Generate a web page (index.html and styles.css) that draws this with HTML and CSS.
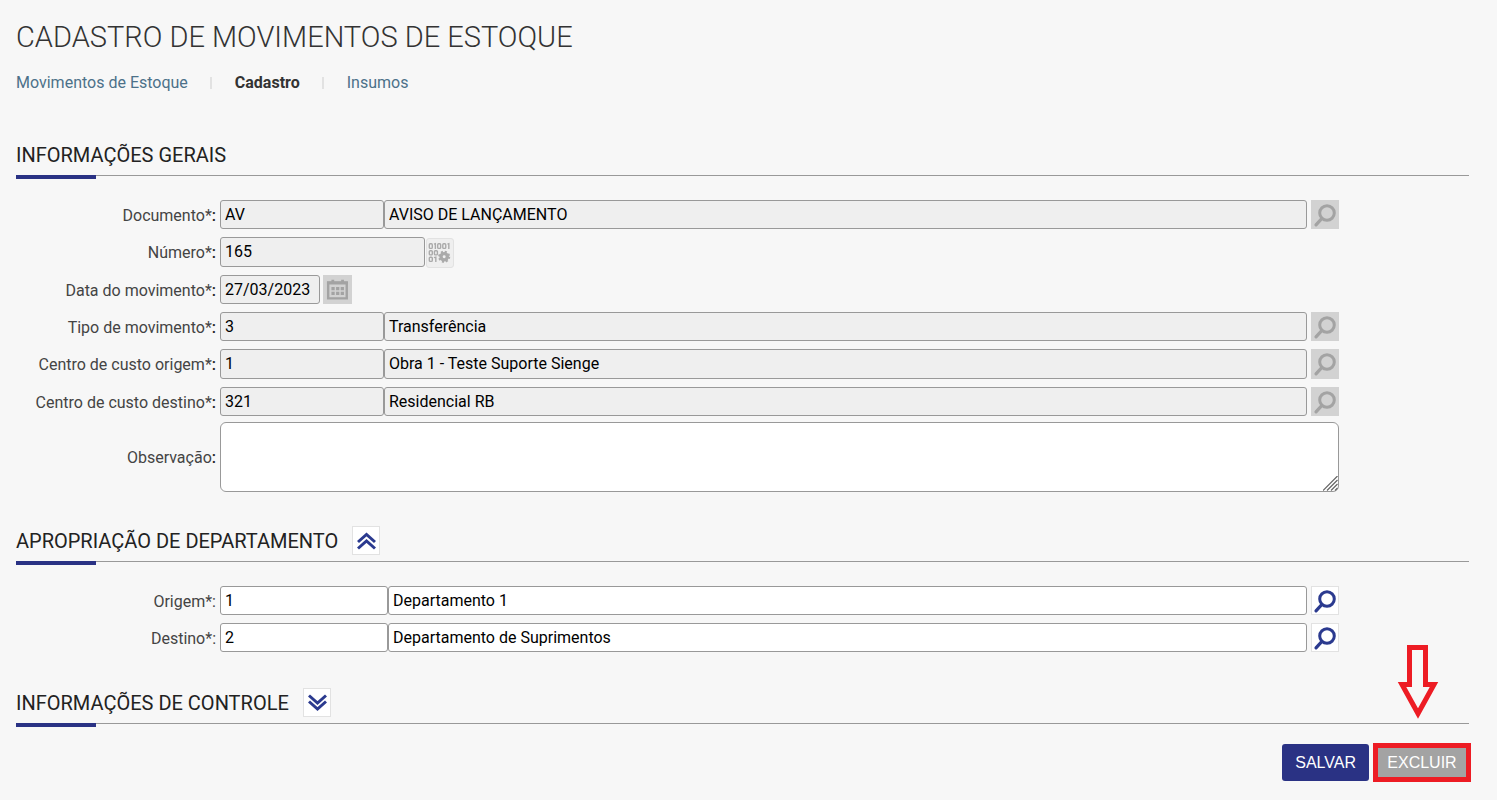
FILE: index.html
```
<!DOCTYPE html>
<html lang="pt-BR">
<head>
<meta charset="utf-8">
<meta name="viewport" content="width=device-width, initial-scale=1">
<title>Cadastro de Movimentos de Estoque</title>
<link rel="stylesheet" href="styles.css">
</head>
<body>
<svg class="sprite" aria-hidden="true">
  <symbol id="search" viewBox="0 0 26 26">
    <circle cx="15" cy="11" r="7.300" fill="none" stroke="currentColor" stroke-width="3"/>
    <path d="M9.500 16.800 L4 22.800" fill="none" stroke="currentColor" stroke-width="3.200" stroke-linecap="round"/>
  </symbol>
</svg>
<main class="page">
  <h1 class="title">CADASTRO DE MOVIMENTOS DE ESTOQUE</h1>
  <nav class="tabs">
    <a class="tab" href="#">Movimentos de Estoque</a>
    <a class="tab active" href="#" aria-current="page">Cadastro</a>
    <a class="tab" href="#">Insumos</a>
  </nav>

  <form class="form">
    <section class="section">
      <div class="heading"><h2>INFORMAÇÕES GERAIS</h2></div>
      <div class="rows">
        <div class="row">
          <label for="doc">Documento*<b>:</b></label>
          <div class="field"><input id="doc" class="code" value="AV" readonly><input class="desc" aria-label="Descrição do documento" value="AVISO DE LANÇAMENTO" readonly><button type="button" class="icon off" aria-label="Pesquisar documento"><svg><use href="#search"/></svg></button></div>
        </div>
        <div class="row tall">
          <label for="num">Número*<b>:</b></label>
          <div class="field"><input id="num" class="number" value="165" readonly><button type="button" class="icon generate" aria-label="Gerar número">
            <svg viewBox="0 0 28 28" fill="none" stroke="currentColor" stroke-width="1.500">
              <rect x="2.500" y="4" width="3.200" height="5" rx="1"/><path d="M7.500 4.500 L9 4 V9.800"/><rect x="11.500" y="4" width="3.200" height="5" rx="1"/><rect x="17" y="4" width="3.200" height="5" rx="1"/><path d="M22 4.500 L23.500 4 V9.800"/>
              <rect x="2.500" y="11.500" width="3.200" height="4.500" rx="1"/><rect x="8" y="11.500" width="3.200" height="4.500" rx="1"/>
              <rect x="2.500" y="18.500" width="3.200" height="4.500" rx="1"/><path d="M7.500 19 L9.500 18.500 V23.800"/>
              <circle cx="18.500" cy="18" r="3.400" stroke-width="3.600"/><circle cx="18.500" cy="18" r="5.400" stroke-width="2.200" stroke-dasharray="2.200 2.040"/>
            </svg></button></div>
        </div>
        <div class="row">
          <label for="date">Data do movimento*<b>:</b></label>
          <div class="field"><input id="date" class="date" value="27/03/2023" readonly><button type="button" class="icon off" aria-label="Abrir calendário">
            <svg viewBox="0 0 28 28"><path d="M4.500 6h20v17H4.500z" fill="none" stroke="currentColor" stroke-width="2.600"/><path d="M3.200 5h22.600v3H3.200zM8 3h3v3H8zM18.500 3h3v3h-3z" fill="currentColor"/><path d="M8 12.500h13.500M8 17.500h13.500" stroke="currentColor" stroke-width="3.500" stroke-dasharray="3.500 1.500"/></svg></button></div>
        </div>
        <div class="row">
          <label for="type">Tipo de movimento*<b>:</b></label>
          <div class="field"><input id="type" class="code" value="3" readonly><input class="desc" aria-label="Descrição do tipo" value="Transferência" readonly><button type="button" class="icon off" aria-label="Pesquisar tipo"><svg><use href="#search"/></svg></button></div>
        </div>
        <div class="row tall">
          <label for="from">Centro de custo origem*<b>:</b></label>
          <div class="field"><input id="from" class="code" value="1" readonly><input class="desc" aria-label="Nome do centro de custo origem" value="Obra 1 - Teste Suporte Sienge" readonly><button type="button" class="icon off" aria-label="Pesquisar origem"><svg><use href="#search"/></svg></button></div>
        </div>
        <div class="row">
          <label for="to">Centro de custo destino*<b>:</b></label>
          <div class="field"><input id="to" class="code" value="321" readonly><input class="desc" aria-label="Nome do centro de custo destino" value="Residencial RB" readonly><button type="button" class="icon off" aria-label="Pesquisar destino"><svg><use href="#search"/></svg></button></div>
        </div>
      </div>
      <div class="row note">
        <label for="obs">Observação<b>:</b></label>
        <div class="area">
          <textarea id="obs"></textarea>
          <svg class="grip" viewBox="0 0 15 15" aria-hidden="true"><path d="M0 14.500 L14.500 0M4 14.500 L14.500 4M8 14.500 L14.500 8M12 14.500 L14.500 12" fill="none" stroke="#666" stroke-width="1.200"/></svg>
        </div>
      </div>
    </section>

    <section class="section">
      <div class="heading"><h2>APROPRIAÇÃO DE DEPARTAMENTO</h2><button type="button" class="icon" aria-label="Recolher"><svg viewBox="0 0 26 26" fill="none" stroke="currentColor" stroke-width="3"><path d="M5 14 L13.500 6.500 L22 14M5 20.500 L13.500 13 L22 20.500"/></svg></button></div>
      <div class="rows">
        <div class="row">
          <label for="dfrom">Origem*:</label>
          <div class="field"><input id="dfrom" class="code wide" value="1"><input class="desc" aria-label="Departamento de origem" value="Departamento 1"><button type="button" class="icon" aria-label="Pesquisar departamento de origem"><svg><use href="#search"/></svg></button></div>
        </div>
        <div class="row">
          <label for="dto">Destino*:</label>
          <div class="field"><input id="dto" class="code wide" value="2"><input class="desc" aria-label="Departamento de destino" value="Departamento de Suprimentos"><button type="button" class="icon" aria-label="Pesquisar departamento de destino"><svg><use href="#search"/></svg></button></div>
        </div>
      </div>
    </section>

    <section class="section">
      <div class="heading"><h2>INFORMAÇÕES DE CONTROLE</h2><button type="button" class="icon" aria-label="Expandir"><svg viewBox="0 0 26 26" fill="none" stroke="currentColor" stroke-width="3"><path d="M5 5.500 L13.500 13 L22 5.500M5 11.500 L13.500 19 L22 11.500"/></svg></button></div>
    </section>

    <div class="actions">
      <button type="submit" class="save">SALVAR</button>
      <div class="target">
        <svg class="arrow" viewBox="0 0 42 75" aria-hidden="true"><path d="M12.500 2.500 H28.500 V39.500 H37 L21 68.500 L5 39.500 H12.500 Z" fill="none" stroke="#ed1c24" stroke-width="5"/></svg>
        <button type="button" class="delete">EXCLUIR</button>
      </div>
    </div>
  </form>
</main>
</body>
</html>
```
FILE: styles.css
```
* { box-sizing: border-box; }
body {
  margin: 0;
  background: #f7f7f7;
  color: #444;
  font: 16px/20px Roboto, sans-serif;
}
.sprite { display: none; }
.page { padding: 19px 28px 16px 16px; }
.title {
  margin: 0;
  color: #333;
  font-size: 29px;
  font-weight: 300;
  line-height: 36px;
}
.tabs { display: flex; margin-top: 18px; }
.tab { color: #4c7189; text-decoration: none; }
.tab + .tab { display: flex; align-items: center; }
.tab + .tab::before {
  content: "";
  width: 2px;
  height: 12px;
  margin: 0 23px 0 22px;
  background: #e2e2e2;
}
.tab.active { color: #333; font-weight: 700; }

.form { margin-top: 47px; }
.section { margin-bottom: 34px; }
.heading { display: flex; flex-wrap: wrap; align-items: center; column-gap: 14px; }
.heading h2 {
  margin: 0;
  color: #222;
  font-size: 20px;
  font-weight: 400;
  line-height: 30px;
}
.heading .icon { align-self: flex-start; margin: 0; }
.heading::after {
  content: "";
  flex: 0 0 100%;
  height: 4px;
  margin-top: 5px;
  background:
    linear-gradient(#2a3284, #2a3284) 0 0 / 80px 4px no-repeat,
    linear-gradient(#999, #999) 0 0 / 100% 1px no-repeat;
}
.rows { display: grid; gap: 8px; padding: 21px 0 2px; }
.row {
  display: grid;
  grid-template-columns: 200px 1fr;
  column-gap: 4px;
  align-items: center;
  margin-right: 130px;
}
.row label { padding-top: 2px; text-align: right; }
.row b { color: #222; font-weight: 500; }
.field { display: flex; height: 29px; }
.tall .field { height: 30px; }
input, textarea {
  min-width: 0;
  margin: 0;
  padding: 0 4px;
  border: 1px solid #999;
  border-radius: 3px;
  background: #fff;
  color: #000;
  font: 16px/20px Roboto, sans-serif;
  outline: 0;
}
input:read-only { background: #efefef; }
.code { width: 164px; }
.wide { width: 168px; }
.desc { flex: 1; }
.number { width: 205px; }
.date { width: 100px; }
.icon {
  width: 28px;
  height: 29px;
  margin: 0 0 0 4px;
  padding: 0;
  border: 1px solid #e2e2e2;
  background: #fff;
  color: #2b3a8f;
}
.icon svg { display: block; width: 26px; height: 26px; }
.tall .icon { height: 30px; }
.off { border-color: #d2d2d2; background: #d2d2d2; color: #a3a3a3; }
.date + .icon { width: 29px; margin-left: 3px; }
.generate { margin: 1px 0 0 1px; border-radius: 3px; background: #efefef; color: #aaa; }
.note { padding-top: 4px; }
.area { position: relative; }
textarea { display: block; width: 100%; height: 70px; padding: 4px; border-radius: 6px; resize: none; }
.grip { position: absolute; right: 1px; bottom: 1px; width: 15px; height: 15px; }

.actions { display: flex; justify-content: flex-end; align-items: center; gap: 4px; margin: -18px -2px 0 0; }
.save, .delete { font: 16px/20px "Liberation Sans", Arial, sans-serif; color: #fff; }
.save { height: 37px; padding: 0 13px; border: 0; border-radius: 3px; background: #2a3284; }
.delete { display: block; width: 98px; height: 39px; padding: 0; border: 5px solid #ed1c24; background: #a3a3a3; }
.target { position: relative; }
.arrow { position: absolute; bottom: 100%; left: 24px; width: 42px; height: 75px; margin-bottom: 23px; }
```
